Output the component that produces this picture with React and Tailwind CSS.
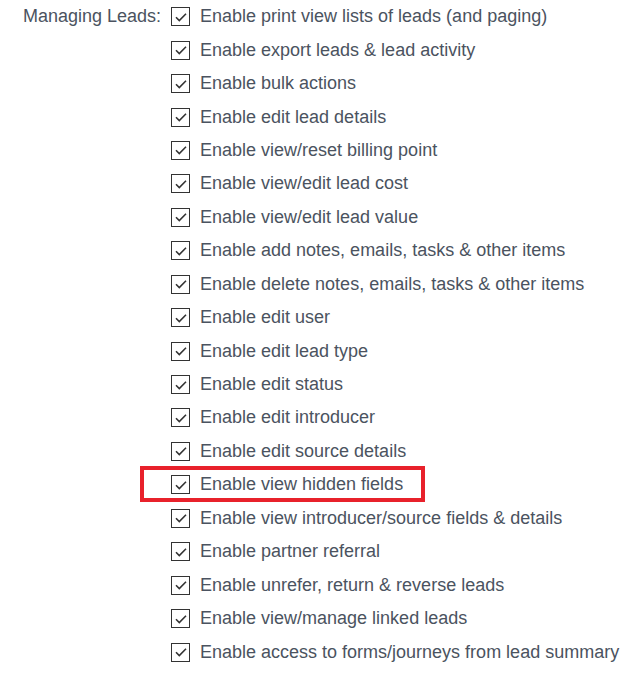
import React from "react";

const items = [
  "Enable print view lists of leads (and paging)",
  "Enable export leads & lead activity",
  "Enable bulk actions",
  "Enable edit lead details",
  "Enable view/reset billing point",
  "Enable view/edit lead cost",
  "Enable view/edit lead value",
  "Enable add notes, emails, tasks & other items",
  "Enable delete notes, emails, tasks & other items",
  "Enable edit user",
  "Enable edit lead type",
  "Enable edit status",
  "Enable edit introducer",
  "Enable edit source details",
  "Enable view hidden fields",
  "Enable view introducer/source fields & details",
  "Enable partner referral",
  "Enable unrefer, return & reverse leads",
  "Enable view/manage linked leads",
  "Enable access to forms/journeys from lead summary",
];

function Check() {
  return (
    <span className="flex h-[19px] w-[19px] shrink-0 items-center justify-center border-[1.5px] border-[#333] bg-white">
      <svg width="14" height="14" viewBox="0 0 14 14" fill="none">
        <path d="M2 7.2 L5.3 10.5 L12 3.8" stroke="#333" strokeWidth="1.6" />
      </svg>
    </span>
  );
}

export default function App() {
  return (
    <div className="h-[675px] w-[642px] bg-white font-['Liberation_Sans',Arial,sans-serif] text-[18px] text-[#4b5360]">
      <div className="flex">
        {/* label */}
        <div className="w-[171px] shrink-0 pl-[23px]">
          <div className="flex h-[33.45px] items-center">Managing Leads:</div>
        </div>
        {/* options */}
        <div className="flex flex-col">
          {items.map((t, i) => (
            <div key={i} className="relative flex h-[33.45px] items-center gap-[10px]">
              {i === 14 && (
                <div className="absolute left-[-31px] top-[-2px] h-[36px] w-[285px] border-[4px] border-[#e8212b]" />
              )}
              <Check />
              <span className="whitespace-nowrap">{t}</span>
            </div>
          ))}
        </div>
      </div>
    </div>
  );
}
